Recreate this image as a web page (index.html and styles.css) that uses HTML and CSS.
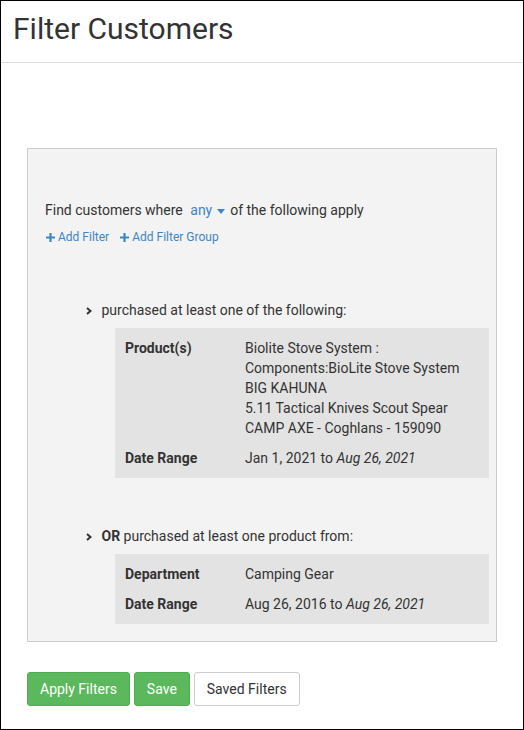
FILE: index.html
```html
<!DOCTYPE html>
<html lang="en">
  <head>
    <meta charset="UTF-8" />
    <meta name="viewport" content="width=device-width, initial-scale=1.0" />
    <title>Filter Customers</title>
    <link rel="stylesheet" href="styles.css">
  </head>
  <body>
    <div class="page">
      <!-- header -->
      <div class="page-header">
        <h1>Filter Customers</h1>
      </div>

      <div class="page-body">
        <div class="filter-panel">
          <div class="match-line">
            Find customers where
            <span class="any-toggle">any <span class="caret"></span></span>
            of the following apply
          </div>
          <div class="add-links">
            <a class="add-link"><svg class="plus" width="9" height="9" viewBox="0 0 9 9"><path d="M4.5 0 V9 M0 4.5 H9" stroke="#3d86c6" stroke-width="2.2"/></svg>Add Filter</a>
            <a class="add-link"><svg class="plus" width="9" height="9" viewBox="0 0 9 9"><path d="M4.5 0 V9 M0 4.5 H9" stroke="#3d86c6" stroke-width="2.2"/></svg>Add Filter Group</a>
          </div>

          <!-- filter 1 -->
          <div class="filter-item first">
            <div class="filter-title">
              <svg class="chevron" width="6" height="8" viewBox="0 0 6 8"><path d="M1 1 L4.5 4 L1 7" fill="none" stroke="#333" stroke-width="2"/></svg>
              purchased at least one of the following:
            </div>
            <table class="filter-details">
              <tr>
                <th>Product(s)</th>
                <td>
                  Biolite Stove System :<br />
                  Components:BioLite Stove System<br />
                  BIG KAHUNA<br />
                  5.11 Tactical Knives Scout Spear<br />
                  CAMP AXE - Coghlans - 159090
                </td>
              </tr>
              <tr>
                <th>Date Range</th>
                <td>Jan 1, 2021 to <em>Aug 26, 2021</em></td>
              </tr>
            </table>
          </div>

          <!-- filter 2 -->
          <div class="filter-item">
            <div class="filter-title">
              <svg class="chevron" width="6" height="8" viewBox="0 0 6 8"><path d="M1 1 L4.5 4 L1 7" fill="none" stroke="#333" stroke-width="2"/></svg>
              <b>OR</b> purchased at least one product from:
            </div>
            <table class="filter-details">
              <tr>
                <th>Department</th>
                <td>Camping Gear</td>
              </tr>
              <tr>
                <th>Date Range</th>
                <td>Aug 26, 2016 to <em>Aug 26, 2021</em></td>
              </tr>
            </table>
          </div>
        </div>

        <div class="actions">
          <button class="btn btn-green">Apply Filters</button>
          <button class="btn btn-green">Save</button>
          <button class="btn btn-white">Saved Filters</button>
        </div>
      </div>
    </div>
  </body>
</html>
```

FILE: styles.css
```css
body {
  margin: 0;
  background: white;
  font-family: Roboto, "Liberation Sans", sans-serif;
  color: #333;
}

.page {
  width: 524px;
  height: 730px;
  box-sizing: border-box;
  border: 1px solid #000;
}

.page-header {
  padding: 12px 12px 12px 12px;
  height: 37px;
  border-bottom: 1px solid #ddd;
}

.page-header h1 {
  margin: 0;
  font-size: 30px;
  font-weight: 400;
  line-height: 32px;
}

.page-body {
  padding: 85px 26px 0;
}

.filter-panel {
  background: #f3f3f3;
  border: 1px solid #ccc;
  padding: 51px 7px 17px 17px;
}

.match-line {
  font-size: 14px;
  line-height: 20px;
}

.any-toggle {
  color: #3d86c6;
  margin: 0 2px 0 4px;
}

.caret {
  display: inline-block;
  width: 0;
  height: 0;
  border-left: 4px solid transparent;
  border-right: 4px solid transparent;
  border-top: 5px solid #3d86c6;
  vertical-align: middle;
  margin-left: 1px;
}

.add-links {
  margin-top: 9px;
  font-size: 12px;
  line-height: 17px;
  display: flex;
  gap: 10px;
}

.add-link {
  color: #3d86c6;
  cursor: pointer;
  display: inline-flex;
  align-items: center;
}

.plus {
  margin: 0 3px 0 1px;
}

.filter-item {
  margin-top: 48px;
  padding-left: 41px;
}

.filter-item.first {
  margin-top: 54px;
}

.filter-title {
  font-size: 14px;
  line-height: 20px;
  margin-bottom: 8px;
}

.chevron {
  margin-right: 6px;
  vertical-align: 0;
}

.filter-details {
  margin-left: 29px;
  width: calc(100% - 29px);
  background: #e3e3e3;
  border-collapse: collapse;
  font-size: 14px;
  line-height: 20px;
}

.filter-details th,
.filter-details td {
  padding: 10px 0 0;
  text-align: left;
  vertical-align: top;
}

.filter-details tr:last-child th,
.filter-details tr:last-child td {
  padding-bottom: 10px;
}

.filter-details th {
  width: 120px;
  padding-left: 10px;
  font-weight: 700;
}

.actions {
  margin-top: 30px;
}

.btn {
  font-family: Roboto, "Liberation Sans", sans-serif;
  font-size: 14px;
  height: 34px;
  padding: 0 12px;
  border-radius: 3px;
  cursor: pointer;
}

.btn-green {
  background: #5cb85c;
  border: 1px solid #4cae4c;
  color: white;
}

.btn-white {
  background: white;
  border: 1px solid #ccc;
  color: #333;
}
```
